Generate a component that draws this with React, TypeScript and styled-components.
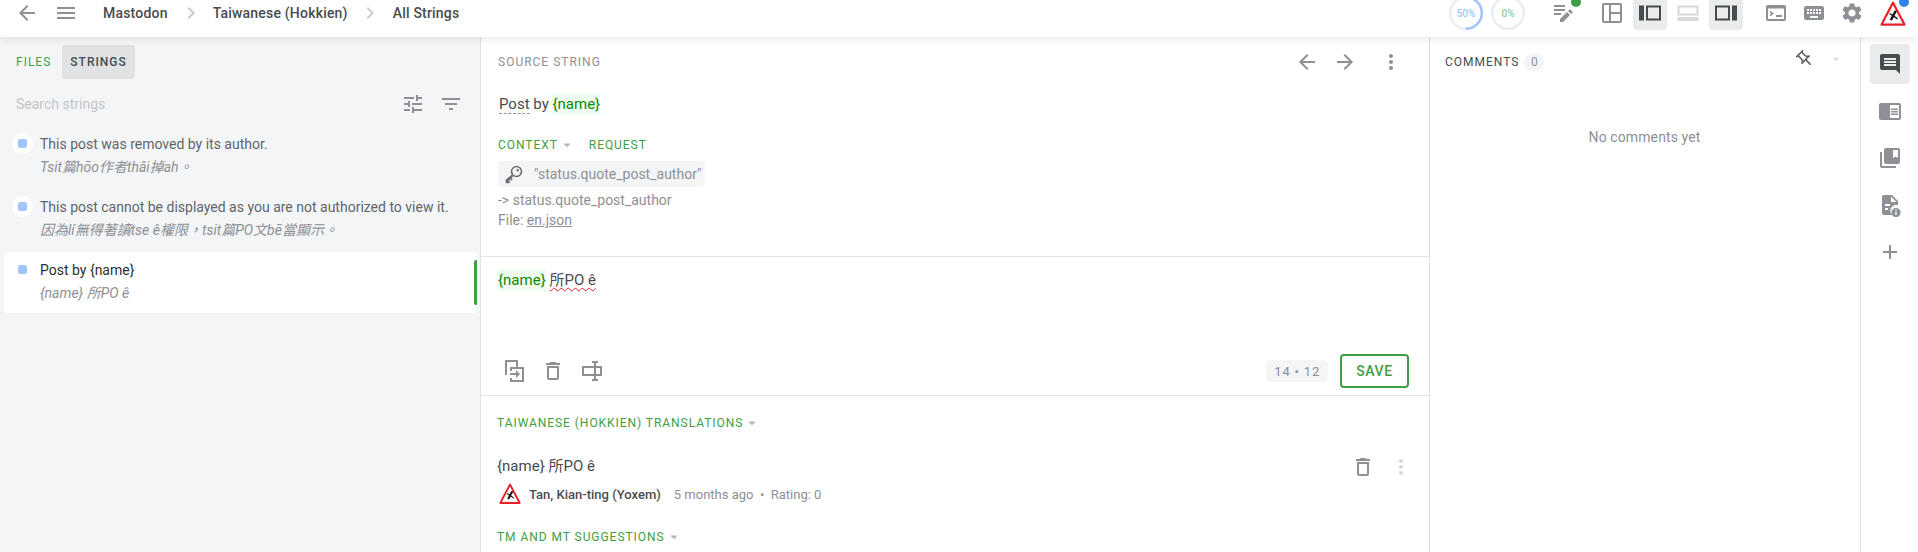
import React from "react";
import styled, { createGlobalStyle } from "styled-components";

const GlobalStyle = createGlobalStyle`
  html, body {
    margin: 0;
    padding: 0;
    background: #fff;
  }
  body {
    font-family: Roboto, "Noto Sans CJK TC", sans-serif;
    color: #474c4f;
    overflow: hidden;
  }
`;

const P = {
  back: "M20 11H7.83l5.59-5.59L12 4l-8 8 8 8 1.41-1.41L7.83 13H20v-2z",
  forward: "M12 4l-1.41 1.41L16.17 11H4v2h12.17l-5.58 5.59L12 20l8-8z",
  menu: "M3 18h18v-2H3v2zm0-5h18v-2H3v2zm0-7v2h18V6H3z",
  chevron: "M10 6L8.59 7.41 13.17 12l-4.58 4.59L10 18l6-6z",
  tune: "M3 17v2h6v-2H3zM3 5v2h10V5H3zm10 16v-2h8v-2h-8v-2h-2v6h2zM7 9v2H3v2h4v2h2V9H7zm14 4v-2H11v2h10zm-6-4h2V7h4V5h-4V3h-2v6z",
  filter: "M10 18h4v-2h-4v2zM3 6v2h18V6H3zm3 7h12v-2H6v2z",
  more: "M12 8c1.1 0 2-.9 2-2s-.9-2-2-2-2 .9-2 2 .9 2 2 2zm0 2c-1.1 0-2 .9-2 2s.9 2 2 2 2-.9 2-2-.9-2-2-2zm0 6c-1.1 0-2 .9-2 2s.9 2 2 2 2-.9 2-2-.9-2-2-2z",
  trash: "M6 19c0 1.1.9 2 2 2h8c1.1 0 2-.9 2-2V7H6v12zM8 9h8v10H8V9zm7.5-5l-1-1h-5l-1 1H5v2h14V4z",
  gear: "M19.14 12.94c.04-.3.06-.61.06-.94 0-.32-.02-.64-.07-.94l2.03-1.58c.18-.14.23-.41.12-.61l-1.92-3.32c-.12-.22-.37-.29-.59-.22l-2.39.96c-.5-.38-1.03-.7-1.62-.94l-.36-2.54c-.04-.24-.24-.41-.48-.41h-3.84c-.24 0-.43.17-.47.41l-.36 2.54c-.59.24-1.13.57-1.62.94l-2.39-.96c-.22-.08-.47 0-.59.22L2.74 8.87c-.12.21-.08.47.12.61l2.03 1.58c-.05.3-.09.63-.09.94s.02.64.07.94l-2.03 1.58c-.18.14-.23.41-.12.61l1.92 3.32c.12.22.37.29.59.22l2.39-.96c.5.38 1.03.7 1.62.94l.36 2.54c.05.24.24.41.48.41h3.84c.24 0 .44-.17.47-.41l.36-2.54c.59-.24 1.13-.56 1.62-.94l2.39.96c.22.08.47 0 .59-.22l1.92-3.32c.12-.22.07-.47-.12-.61l-2.01-1.58zM12 15.6c-1.98 0-3.6-1.62-3.6-3.6s1.62-3.6 3.6-3.6 3.6 1.62 3.6 3.6-1.62 3.6-3.6 3.6z",
  keyboard: "M20 5H4c-1.1 0-1.99.9-1.99 2L2 17c0 1.1.9 2 2 2h16c1.1 0 2-.9 2-2V7c0-1.1-.9-2-2-2zm-9 3h2v2h-2V8zm0 3h2v2h-2v-2zM8 8h2v2H8V8zm0 3h2v2H8v-2zm-1 2H5v-2h2v2zm0-3H5V8h2v2zm9 7H8v-2h8v2zm0-4h-2v-2h2v2zm0-3h-2V8h2v2zm3 3h-2v-2h2v2zm0-3h-2V8h2v2z",
  comment: "M21.99 4c0-1.1-.89-2-1.99-2H4c-1.1 0-2 .9-2 2v12c0 1.1.9 2 2 2h14l4 4-.01-18zM18 14H6v-2h12v2zm0-3H6V9h12v2zm0-3H6V6h12v2z",
  add: "M19 13h-6v6h-2v-6H5v-2h6V5h2v6h6v2z",
  library: "M4 6H2v14c0 1.1.9 2 2 2h14v-2H4V6zm16-4H8c-1.1 0-2 .9-2 2v12c0 1.1.9 2 2 2h12c1.1 0 2-.9 2-2V4c0-1.1-.9-2-2-2zm0 10l-2.5-1.5L15 12V4h5v8z",
  reader: "M13 12h7v1.5h-7zm0-2.5h7V11h-7zm0 5h7V16h-7zM21 4H3c-1.1 0-2 .9-2 2v13c0 1.1.9 2 2 2h18c1.1 0 2-.9 2-2V6c0-1.1-.9-2-2-2zm0 15h-9V6h9v13z",
  pin: "M14 4v5c0 1.12.37 2.16 1 3H9c.65-.86 1-1.9 1-3V4h4m3-2H7c-.55 0-1 .45-1 1s.45 1 1 1h1v5c0 1.66-1.34 3-3 3v2h5.97v7l1 1 1-1v-7H19v-2c-1.66 0-3-1.34-3-3V4h1c.55 0 1-.45 1-1s-.45-1-1-1z",
  key: "M15 2a7 7 0 1 1 0 14 7 7 0 0 1 0-14zm0 2a5 5 0 1 0 0 10 5 5 0 0 0 0-10zm1.5 2a1.5 1.5 0 1 1 0 3 1.5 1.5 0 0 1 0-3zM9 13l2 2-2 2 1.5 1.5-1.5 1.5-1.5-1.5-1.5 1.5 1.5 1.5-1.5 1.5H2v-4z",
  notes: "M3 4h11v2H3zM3 8h11v2H3zM3 12h7v2H3zM9 18l7-7 3 3-7 7H9zM17 10l1.3-1.3a1 1 0 0 1 1.4 0l1.6 1.6a1 1 0 0 1 0 1.4L20 13z",
  layoutGrid: "M4 2h16a2 2 0 0 1 2 2v16a2 2 0 0 1-2 2H4a2 2 0 0 1-2-2V4a2 2 0 0 1 2-2zm0 2v16h5V4zm7 0v7h9V4zm0 9v7h9v-7z",
  layoutLeft: "M1 4.5h5v15H1zM8 4.5h15v15H8zM10 6.5v11h11v-11z",
  layoutBottom: "M1.5 4.5h21v10h-21zM3.5 6.5v6h17v-6zM1.5 16h21v4h-21z",
  layoutRight: "M1 4.5h15v15H1zM3 6.5v11h11v-11zM18 4.5h5v15h-5z",
  terminal: "M4 4h16a2 2 0 0 1 2 2v12a2 2 0 0 1-2 2H4a2 2 0 0 1-2-2V6a2 2 0 0 1 2-2zm0 3.5V18h16V7.5zM6 9.5l4 3-4 3v-2l1.6-1-1.6-1zM12 14h6v2h-6z",
  copy: "M3 1h13v2H5v13H3zM14 3h2v5h-2zM8 8h14v15H8v-4h2v2h10V10H10v2H8zM8 14h6v-3l4 4-4 4v-3H8z",
  caret: "M7 10l5 5 5-5z",
  doc: "M6 2h8l6 6v4.2a5.8 5.8 0 0 0-7.7 5.3c0 1.7.7 3.3 2 4.5H6a2 2 0 0 1-2-2V4a2 2 0 0 1 2-2zm7 1.5V9h5.5L13 3.5zM7 11v2h5v-2H7zm0 4v2h3v-2H7zm11 0a4.6 4.6 0 1 1 0 9.2 4.6 4.6 0 0 1 0-9.2zm-.7 1.6v1.5h1.4v-1.5h-1.4zm0 2.4v3h1.4v-3h-1.4z",
  space: "M12 2h6v2h-2v3h6v10h-6v3h2v2h-6v-2h2v-3H2V7h12V4h-2zM4 9v6h10V9zm12 0v6h4V9z",
};

const Icon = styled.svg<{ $size?: number; $color?: string; $turn?: number }>`
  display: block;
  flex: none;
  width: ${(p) => p.$size ?? 24}px;
  height: ${(p) => p.$size ?? 24}px;
  fill: ${(p) => p.$color ?? "#8d9094"};
  transform: ${(p) => (p.$turn ? `rotate(${p.$turn}deg)` : "none")};
`;

type GlyphProps = { d: string; size?: number; color?: string; turn?: number };

function Glyph({ d, size, color, turn }: GlyphProps) {
  return (
    <Icon viewBox="0 0 24 24" $size={size} $color={color} $turn={turn}>
      <path d={d} fillRule="evenodd" />
    </Icon>
  );
}

const LogoMark = styled.svg<{ $size: number }>`
  display: block;
  flex: none;
  width: ${(p) => p.$size}px;
  height: ${(p) => p.$size}px;
`;

function WarningLogo({ size }: { size: number }) {
  return (
    <LogoMark viewBox="0 0 24 24" $size={size}>
      <path d="M12 1.6 22.6 21.8H1.4z" fill="#fff" stroke="#e8202a" strokeWidth="2" strokeLinejoin="round" />
      <path d="M14.6 9 10 17.6" stroke="#111" strokeWidth="2.2" fill="none" />
      <path d="M9 11.5 16.2 16.5" stroke="#111" strokeWidth="1.3" fill="none" />
    </LogoMark>
  );
}

function Ring({ value, color, label }: { value: number; color: string; label: string }) {
  const r = 15.8;
  const c = 2 * Math.PI * r;
  return (
    <RingBox>
      <svg width="34" height="34" viewBox="0 0 34 34">
        <circle cx="17" cy="17" r={r} fill="none" stroke="#eaeef2" strokeWidth="2.4" />
        <circle
          cx="17"
          cy="17"
          r={r}
          fill="none"
          stroke={color}
          strokeWidth="2.4"
          strokeDasharray={`${(c * value) / 100} ${c}`}
          transform="rotate(-90 17 17)"
        />
      </svg>
      <RingLabel $color={color}>{label}</RingLabel>
    </RingBox>
  );
}

const Page = styled.div`
  width: 1918px;
  height: 552px;
  display: flex;
  flex-direction: column;
  overflow: hidden;
`;

const TopBar = styled.header`
  height: 37px;
  flex: none;
  display: flex;
  align-items: flex-start;
  background: #fff;
  box-shadow: 0 2px 8px rgba(50, 60, 70, 0.12);
  position: relative;
  z-index: 2;
`;

const NavGroup = styled.div`
  display: flex;
  align-items: center;
  height: 26px;
  padding-left: 15px;
`;

const Gap = styled.span<{ $w: number }>`
  flex: none;
  width: ${(p) => p.$w}px;
`;

const Crumb = styled.span`
  font-size: 14px;
  font-weight: 500;
  letter-spacing: 0.2px;
  color: #474c4f;
  white-space: nowrap;
`;

const ToolGroup = styled.div`
  margin-left: auto;
  display: flex;
  align-items: flex-start;
  height: 30px;
  padding-right: 8px;
`;

const RingBox = styled.div`
  position: relative;
  flex: none;
  width: 34px;
  height: 34px;
  margin-top: -4px;
`;

const RingLabel = styled.span<{ $color: string }>`
  position: absolute;
  inset: 0;
  display: flex;
  align-items: center;
  justify-content: center;
  font-size: 10px;
  font-weight: 500;
  color: ${(p) => p.$color};
`;

const ToolButton = styled.div<{ $on?: boolean }>`
  width: 34px;
  height: 30px;
  box-sizing: border-box;
  padding-top: 1px;
  display: flex;
  align-items: flex-start;
  justify-content: center;
  position: relative;
  border-radius: 0 0 4px 4px;
  background: ${(p) => (p.$on ? "#e9ebed" : "transparent")};
`;

const Dot = styled.span<{ $color: string; $right: number }>`
  position: absolute;
  width: 10px;
  height: 10px;
  border-radius: 50%;
  top: -3px;
  right: ${(p) => p.$right}px;
  background: ${(p) => p.$color};
`;

const Body = styled.div`
  flex: 1;
  min-height: 0;
  display: flex;
`;

const LeftPanel = styled.aside`
  width: 480px;
  flex: none;
  background: #f4f5f7;
  padding: 8px 0 0 4px;
  box-sizing: border-box;
`;

const TabRow = styled.div`
  display: flex;
  align-items: center;
  height: 34px;
  padding-left: 4px;
  gap: 3px;
`;

const Tab = styled.div<{ $on?: boolean }>`
  height: 34px;
  display: flex;
  align-items: center;
  padding: 0 8px;
  border-radius: 3px;
  font-size: 12px;
  font-weight: ${(p) => (p.$on ? 500 : 400)};
  letter-spacing: 1px;
  color: ${(p) => (p.$on ? "#474c4f" : "#3e9e44")};
  background: ${(p) => (p.$on ? "#e0e2e4" : "transparent")};
`;

const SearchRow = styled.div`
  display: flex;
  align-items: center;
  height: 24px;
  margin-top: 13px;
  padding: 0 17px 0 12px;
  gap: 14px;
`;

const SearchText = styled.span`
  flex: 1;
  font-size: 14px;
  color: #c2c5c8;
`;

const StringList = styled.div`
  margin-top: 10px;
  display: flex;
  flex-direction: column;
  gap: 2px;
  width: 473px;
`;

const StringRow = styled.div<{ $on?: boolean }>`
  position: relative;
  display: flex;
  height: 61px;
  box-sizing: border-box;
  padding: 8px 0 0 8px;
  border-radius: 4px;
  background: ${(p) => (p.$on ? "#fff" : "transparent")};
`;

const ActiveMark = styled.span`
  position: absolute;
  right: 0;
  top: 8px;
  bottom: 8px;
  width: 3px;
  border-radius: 2px 0 0 2px;
  background: #3e9e44;
`;

const StatusHalo = styled.span<{ $on?: boolean }>`
  width: 21px;
  height: 21px;
  flex: none;
  border-radius: 50%;
  display: flex;
  align-items: center;
  justify-content: center;
  margin: -1px 0 0 0;
  background: ${(p) => (p.$on ? "transparent" : "#fff")};
`;

const StatusSquare = styled.span`
  width: 9px;
  height: 9px;
  border-radius: 2.5px;
  background: #9fc5fb;
`;

const StringText = styled.div`
  margin-left: 7px;
  min-width: 0;
`;

const SourceLine = styled.div<{ $on?: boolean }>`
  font-size: 14px;
  line-height: 20px;
  color: ${(p) => (p.$on ? "#2b2f32" : "#5f6468")};
  white-space: nowrap;
`;

const TargetLine = styled.div`
  margin-top: 3px;
  font-size: 14px;
  line-height: 20px;
  font-style: italic;
  color: #8d9094;
  white-space: nowrap;
`;

const MainPanel = styled.main`
  width: 950px;
  flex: none;
  box-sizing: border-box;
  border-left: 1px solid #dfe1e3;
  border-right: 1px solid #dfe1e3;
  display: flex;
  flex-direction: column;
`;

const SourceSection = styled.section`
  height: 220px;
  flex: none;
  box-sizing: border-box;
  border-bottom: 1px solid #e2e4e6;
  padding: 0 26px 0 17px;
`;

const SourceHeader = styled.div`
  height: 50px;
  display: flex;
  align-items: center;
  gap: 14px;
`;

const MoreSlot = styled.span`
  margin-left: 8px;
`;

const SectionLabel = styled.span<{ $dark?: boolean }>`
  font-size: 12px;
  letter-spacing: 1px;
  color: ${(p) => (p.$dark ? "#474c4f" : "#8d9094")};
`;

const Spacer = styled.span`
  flex: 1;
`;

const SourceText = styled.div`
  margin-top: 7px;
  padding-left: 1px;
  font-size: 15px;
  line-height: 20px;
  color: #474c4f;
`;

const Dashed = styled.span`
  border-bottom: 1px dashed #8d9094;
`;

const Placeholder = styled.span`
  color: #0a8a0a;
  background: #effbef;
  padding: 2px 0;
`;

const LinkRow = styled.div`
  display: flex;
  align-items: center;
  margin-top: 23px;
  height: 16px;
`;

const GreenLink = styled.span`
  font-size: 12px;
  letter-spacing: 0.95px;
  color: #3e9e44;
  white-space: nowrap;
`;

const ContextTabs = styled.div`
  display: flex;
  align-items: center;
  margin-right: 13px;
`;

const KeyChip = styled.div`
  display: inline-flex;
  align-items: center;
  height: 26px;
  margin-top: 8px;
  padding: 0 4px 0 6px;
  border-radius: 4px;
  background: #f4f5f6;
  font-size: 14px;
  color: #8d9094;
  gap: 10px;
`;

const MetaLine = styled.div<{ $first?: boolean }>`
  margin-top: ${(p) => (p.$first ? "2px" : 0)};
  font-size: 14px;
  line-height: 20px;
  color: #8d9094;
`;

const EditorSection = styled.section`
  height: 139px;
  flex: none;
  box-sizing: border-box;
  border-bottom: 1px solid #e2e4e6;
  padding: 13px 20px 0 17px;
  display: flex;
  flex-direction: column;
`;

const EditorText = styled.div`
  flex: 1;
  font-size: 15px;
  line-height: 20px;
  color: #474c4f;
`;

const Squiggle = styled.span`
  text-decoration: underline wavy #e8202a 1px;
  text-underline-offset: 2px;
`;

const EditorTools = styled.div`
  display: flex;
  align-items: center;
  height: 36px;
  margin-bottom: 6px;
  padding-left: 4px;
  gap: 15px;
`;

const Counter = styled.span`
  display: flex;
  align-items: center;
  height: 22px;
  padding: 0 8px;
  border-radius: 4px;
  background: #f4f5f6;
  font-size: 13px;
  letter-spacing: 0.8px;
  color: #8d9094;
`;

const SaveButton = styled.button`
  width: 69px;
  height: 34px;
  box-sizing: border-box;
  margin: 0 0 0 -3px;
  padding: 0;
  border: 2px solid #3e9e44;
  border-radius: 4px;
  background: #fff;
  font-family: inherit;
  font-size: 14px;
  font-weight: 500;
  letter-spacing: 0.6px;
  color: #3e9e44;
`;

const TranslationSection = styled.section`
  padding: 19px 16px 0 16px;
`;

const TranslationHead = styled.div`
  display: flex;
  align-items: center;
  height: 16px;
`;

const TranslationRow = styled.div`
  display: flex;
  align-items: center;
  margin-top: 24px;
  height: 24px;
`;

const TranslationText = styled.span`
  margin-bottom: 6px;
  font-size: 15px;
  color: #474c4f;
`;

const AuthorRow = styled.div`
  display: flex;
  align-items: center;
  height: 24px;
  margin-top: 3px;
  padding-left: 2px;
  font-size: 13px;
`;

const AuthorName = styled.span`
  margin-left: 8px;
  font-weight: 500;
  color: #474c4f;
`;

const AuthorMeta = styled.span`
  margin-left: 13px;
  color: #8d9094;
`;

const TmHead = styled(TranslationHead)`
  margin-top: 23px;
`;

const CommentsPanel = styled.aside`
  flex: 1;
  min-width: 0;
  padding: 0 16px 0 15px;
`;

const CommentsHeader = styled.div`
  height: 50px;
  display: flex;
  align-items: center;
  gap: 5px;
`;

const CountBadge = styled.span`
  width: 20px;
  height: 18px;
  border-radius: 9px;
  background: #f4f5f6;
  display: flex;
  align-items: center;
  justify-content: center;
  font-size: 12px;
  color: #8d9094;
`;

const PinTools = styled.div`
  display: flex;
  align-items: center;
  margin-top: -6px;
  gap: 13px;
`;

const EmptyNote = styled.div`
  margin-top: 40px;
  text-align: center;
  font-size: 14px;
  letter-spacing: 0.1px;
  line-height: 20px;
  color: #8d9094;
`;

const SideBar = styled.nav`
  width: 58px;
  flex: none;
  box-sizing: border-box;
  border-left: 1px solid #dfe1e3;
  padding: 7px 0 0 9px;
  display: flex;
  flex-direction: column;
  gap: 7px;
`;

const SideButton = styled.div<{ $on?: boolean }>`
  width: 40px;
  height: 40px;
  display: flex;
  align-items: center;
  justify-content: center;
  border-radius: 4px;
  background: ${(p) => (p.$on ? "#e9ebed" : "transparent")};
`;

export default function App() {
  return (
    <Page>
      <GlobalStyle />
      <TopBar>
        <NavGroup>
          <Glyph d={P.back} />
          <Gap $w={15} />
          <Glyph d={P.menu} />
          <Gap $w={25} />
          <Crumb>Mastodon</Crumb>
          <Gap $w={11} />
          <Glyph d={P.chevron} color="#c9cbce" />
          <Gap $w={10} />
          <Crumb>Taiwanese (Hokkien)</Crumb>
          <Gap $w={10} />
          <Glyph d={P.chevron} color="#c9cbce" />
          <Gap $w={11} />
          <Crumb>All Strings</Crumb>
        </NavGroup>
        <ToolGroup>
          <Ring value={50} color="#9fc5fb" label="50%" />
          <Gap $w={8} />
          <Ring value={0} color="#8fd096" label="0%" />
          <Gap $w={21} />
          <ToolButton>
            <Glyph d={P.notes} />
            <Dot $color="#3e9e44" $right={-1} />
          </ToolButton>
          <Gap $w={15} />
          <ToolButton><Glyph d={P.layoutGrid} /></ToolButton>
          <Gap $w={4} />
          <ToolButton $on><Glyph d={P.layoutLeft} color="#474c4f" /></ToolButton>
          <Gap $w={4} />
          <ToolButton><Glyph d={P.layoutBottom} color="#d6d8da" /></ToolButton>
          <Gap $w={4} />
          <ToolButton $on><Glyph d={P.layoutRight} color="#474c4f" /></ToolButton>
          <Gap $w={16} />
          <ToolButton><Glyph d={P.terminal} /></ToolButton>
          <Gap $w={4} />
          <ToolButton><Glyph d={P.keyboard} /></ToolButton>
          <Gap $w={4} />
          <ToolButton><Glyph d={P.gear} /></ToolButton>
          <Gap $w={7} />
          <ToolButton>
            <WarningLogo size={26} />
            <Dot $color="#2d83ec" $right={1} />
          </ToolButton>
        </ToolGroup>
      </TopBar>
      <Body>
        <LeftPanel>
          <TabRow>
            <Tab>FILES</Tab>
            <Tab $on>STRINGS</Tab>
          </TabRow>
          <SearchRow>
            <SearchText>Search strings</SearchText>
            <Glyph d={P.tune} />
            <Glyph d={P.filter} />
          </SearchRow>
          <StringList>
            <StringRow>
              <StatusHalo><StatusSquare /></StatusHalo>
              <StringText>
                <SourceLine>This post was removed by its author.</SourceLine>
                <TargetLine>Tsit篇hōo作者thâi掉ah。</TargetLine>
              </StringText>
            </StringRow>
            <StringRow>
              <StatusHalo><StatusSquare /></StatusHalo>
              <StringText>
                <SourceLine>This post cannot be displayed as you are not authorized to view it.</SourceLine>
                <TargetLine>因為lí無得著讀tse ê權限，tsit篇PO文bē當顯示。</TargetLine>
              </StringText>
            </StringRow>
            <StringRow $on>
              <StatusHalo $on><StatusSquare /></StatusHalo>
              <StringText>
                <SourceLine $on>Post by {"{name}"}</SourceLine>
                <TargetLine>{"{name}"} 所PO ê</TargetLine>
              </StringText>
              <ActiveMark />
            </StringRow>
          </StringList>
        </LeftPanel>
        <MainPanel>
          <SourceSection>
            <SourceHeader>
              <SectionLabel>SOURCE STRING</SectionLabel>
              <Spacer />
              <Glyph d={P.back} />
              <Glyph d={P.forward} />
              <MoreSlot><Glyph d={P.more} /></MoreSlot>
            </SourceHeader>
            <SourceText>
              <Dashed>Post</Dashed> by <Placeholder>{"{name}"}</Placeholder>
            </SourceText>
            <LinkRow>
              <ContextTabs>
                <GreenLink>CONTEXT</GreenLink>
                <Glyph d={P.caret} size={18} color="#b4b7ba" />
              </ContextTabs>
              <GreenLink>REQUEST</GreenLink>
            </LinkRow>
            <KeyChip>
              <Glyph d={P.key} size={20} color="#6d7175" />
              "status.quote_post_author"
            </KeyChip>
            <MetaLine $first>-&gt; status.quote_post_author</MetaLine>
            <MetaLine>File: <u>en.json</u></MetaLine>
          </SourceSection>
          <EditorSection>
            <EditorText>
              <Placeholder>{"{name}"}</Placeholder> <Squiggle>所PO ê</Squiggle>
            </EditorText>
            <EditorTools>
              <Glyph d={P.copy} />
              <Glyph d={P.trash} />
              <Glyph d={P.space} />
              <Spacer />
              <Counter>14 • 12</Counter>
              <SaveButton>SAVE</SaveButton>
            </EditorTools>
          </EditorSection>
          <TranslationSection>
            <TranslationHead>
              <GreenLink>TAIWANESE (HOKKIEN) TRANSLATIONS</GreenLink>
              <Glyph d={P.caret} size={18} color="#b4b7ba" />
            </TranslationHead>
            <TranslationRow>
              <TranslationText>{"{name}"} 所PO ê</TranslationText>
              <Spacer />
              <Glyph d={P.trash} />
              <Gap $w={14} />
              <Glyph d={P.more} color="#d6d8da" />
            </TranslationRow>
            <AuthorRow>
              <WarningLogo size={22} />
              <AuthorName>Tan, Kian-ting (Yoxem)</AuthorName>
              <AuthorMeta>5 months ago &nbsp;•&nbsp; Rating: 0</AuthorMeta>
            </AuthorRow>
            <TmHead>
              <GreenLink>TM AND MT SUGGESTIONS</GreenLink>
              <Glyph d={P.caret} size={18} color="#b4b7ba" />
            </TmHead>
          </TranslationSection>
        </MainPanel>
        <CommentsPanel>
          <CommentsHeader>
            <SectionLabel $dark>COMMENTS</SectionLabel>
            <CountBadge>0</CountBadge>
            <Spacer />
            <PinTools>
              <Glyph d={P.pin} size={20} color="#5f6468" turn={-45} />
              <Glyph d={P.caret} size={16} color="#d6d8da" />
            </PinTools>
          </CommentsHeader>
          <EmptyNote>No comments yet</EmptyNote>
        </CommentsPanel>
        <SideBar>
          <SideButton $on><Glyph d={P.comment} color="#474c4f" /></SideButton>
          <SideButton><Glyph d={P.reader} /></SideButton>
          <SideButton><Glyph d={P.library} /></SideButton>
          <SideButton><Glyph d={P.doc} /></SideButton>
          <SideButton><Glyph d={P.add} /></SideButton>
        </SideBar>
      </Body>
    </Page>
  );
}
